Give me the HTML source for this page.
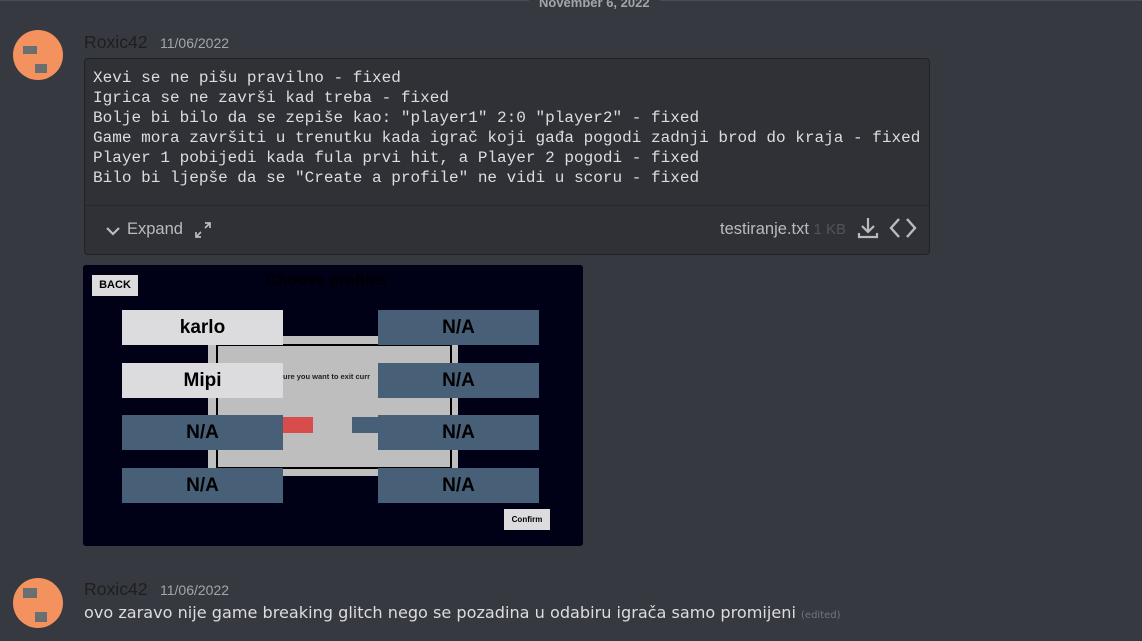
<!DOCTYPE html>
<html><head><meta charset="utf-8"><style>
body{margin:0;width:1142px;height:641px;background:#36393f;overflow:hidden;position:relative;font-family:"Liberation Sans",sans-serif;}
.abs{position:absolute}
.av{position:absolute;width:50px;height:50px;border-radius:50%;background:#f3915f;overflow:hidden}
.av i{position:absolute;background:#6a6f72}
.name{position:absolute;font-size:17.6px;color:#1e1e1e}
.ts{position:absolute;font-size:14px;color:#a3a6aa}
.code{position:absolute;left:84px;top:58px;width:844px;height:195px;background:#2f3136;border:1px solid #202225;border-radius:4px}
.code pre{margin:0;position:absolute;left:8px;top:9px;font-family:"Liberation Mono",monospace;font-size:16.05px;line-height:20px;color:#dcddde;letter-spacing:0}
.div{position:absolute;left:0;right:0;top:146px;border-top:1px solid #26282c}
.gi{position:absolute;left:83px;top:265px;width:500px;height:281px;background:#000016;border-radius:3px;overflow:hidden}
.b{position:absolute;font-weight:bold;color:#000;text-align:center;font-family:"Liberation Sans",sans-serif}
.na{background:#485f78;width:161px;height:35px;line-height:35px;font-size:19px}
.wh{background:#dcdcde;width:161px;height:35px;line-height:35px;font-size:19px}
</style></head><body>
<div class="abs" style="left:0;right:0;top:0;border-top:1px solid #4a4d53"></div>
<div class="abs" style="left:529px;top:-5px;padding:0 10px;background:#36393f;color:#a3a6aa;font-size:13px;font-weight:bold">November 6, 2022</div>

<div class="av" style="left:13px;top:30px"><i style="left:10px;top:16px;width:14px;height:8px"></i><i style="left:22px;top:34px;width:12px;height:9px"></i></div>
<div class="name" style="left:84px;top:32px">Roxic42</div>
<div class="ts" style="left:160px;top:35px">11/06/2022</div>

<div class="code">
<pre>Xevi se ne pišu pravilno - fixed
Igrica se ne završi kad treba - fixed
Bolje bi bilo da se zepiše kao: "player1" 2:0 "player2" - fixed
Game mora završiti u trenutku kada igrač koji gađa pogodi zadnji brod do kraja - fixed
Player 1 pobijedi kada fula prvi hit, a Player 2 pogodi - fixed
Bilo bi ljepše da se "Create a profile" ne vidi u scoru - fixed</pre>
<div class="div"></div>
<svg class="abs" style="left:20px;top:164px" width="16" height="16" viewBox="0 0 16 16"><path d="M2 5l6 6 6-6" stroke="#b9bbbe" stroke-width="2.2" fill="none"/></svg>
<div class="abs" style="left:42px;top:161px;color:#b9bbbe;font-size:16.5px">Expand</div>
<svg class="abs" style="left:109px;top:162px" width="18" height="18" viewBox="0 0 18 18" stroke="#b9bbbe" stroke-width="1.7" fill="none"><path d="M11 2h5v5M16 2l-5 5M2 11v5h5M2 16l5-5"/></svg>
<div class="abs" style="left:635px;top:161px;color:#b9bbbe;font-size:16.5px">testiranje.txt <span style="color:#4f545c;font-size:15px">1 KB</span></div>
<svg class="abs" style="left:771px;top:157px" width="24" height="24" viewBox="0 0 24 24" stroke="#b9bbbe" stroke-width="2.2" fill="none"><path d="M12 2v13M6 10l6 6 6-6M3 17v4h18v-4"/></svg>
<svg class="abs" style="left:803px;top:157px" width="30" height="24" viewBox="0 0 30 24" stroke="#b9bbbe" stroke-width="2.4" fill="none"><path d="M11 3l-8 9 8 9M19 3l8 9-8 9"/></svg>
</div>

<div class="gi">
<div class="abs" style="left:125px;top:71px;width:250px;height:140px;background:#bfbfbf"></div>
<div class="abs" style="left:133px;top:79px;width:232px;height:121px;border:2px solid #000;background:#bebebe"></div>
<div class="b" style="left:183px;top:7px;font-size:16px;color:#000">Choose profiles</div>
<div class="b" style="left:200px;top:107px;font-size:7.5px;color:#222">ure you want to exit curr</div>
<div class="abs" style="left:195px;top:152px;width:35px;height:16px;background:#d94c4c"></div>
<div class="abs" style="left:269px;top:152px;width:30px;height:16px;background:#485f78"></div>
<div class="b" style="left:9px;top:10px;width:46px;height:21px;line-height:21px;background:#dcdcde;font-size:11px">BACK</div>
<div class="b wh" style="left:39px;top:45px">karlo</div>
<div class="b wh" style="left:39px;top:98px">Mipi</div>
<div class="b na" style="left:39px;top:150px">N/A</div>
<div class="b na" style="left:39px;top:203px">N/A</div>
<div class="b na" style="left:295px;top:45px">N/A</div>
<div class="b na" style="left:295px;top:98px">N/A</div>
<div class="b na" style="left:295px;top:150px">N/A</div>
<div class="b na" style="left:295px;top:203px">N/A</div>
<div class="b" style="left:421px;top:244px;width:46px;height:21px;line-height:21px;background:#dcdcde;font-size:8px">Confirm</div>
</div>

<div class="av" style="left:13px;top:578px"><i style="left:10px;top:10px;width:14px;height:10px"></i><i style="left:22px;top:34px;width:12px;height:10px"></i></div>
<div class="name" style="left:84px;top:579px">Roxic42</div>
<div class="ts" style="left:160px;top:582px">11/06/2022</div>
<div class="abs" style="left:84px;top:603px;color:#dcddde;font-size:16.1px;font-family:'DejaVu Sans',sans-serif;white-space:nowrap">ovo zaravo nije game breaking glitch nego se pozadina u odabiru igrača samo promijeni <span style="font-size:10px;color:#72767d">(edited)</span></div>
</body></html>
